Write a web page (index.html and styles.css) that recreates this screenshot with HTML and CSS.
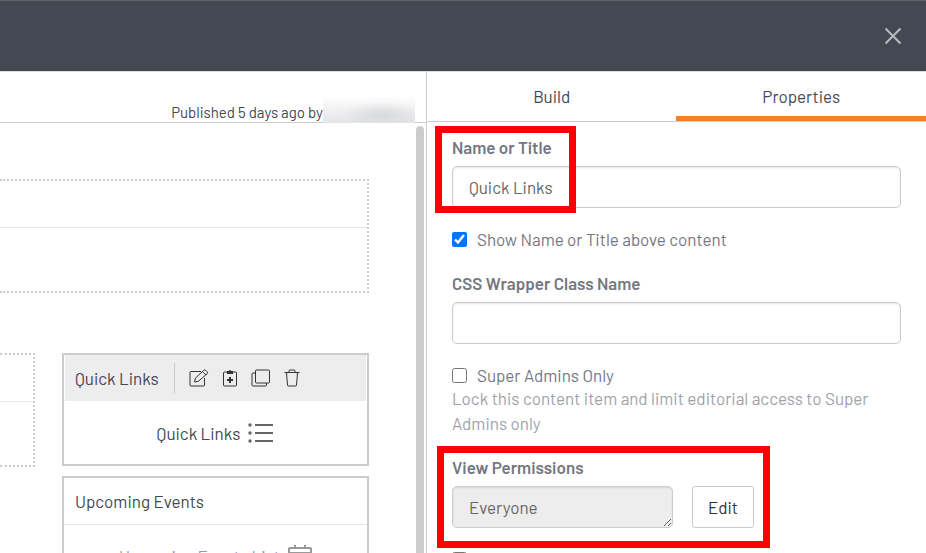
FILE: index.html
```html
<!DOCTYPE html>
<html lang="en">
<head>
    <meta charset="UTF-8">
    <meta name="viewport" content="width=device-width, initial-scale=1.0">
    <title>Quick Links - Properties</title>
    <link rel="stylesheet" href="styles.css">
</head>
<body>
    <header class="topbar">
        <button type="button" class="close-button" aria-label="Close">
            <svg width="18" height="18" viewBox="0 0 18 18"><path d="M1.500 1.500l15 15M16.500 1.500l-15 15"/></svg>
        </button>
    </header>

    <main class="editor">
        <section class="preview">
            <div class="status-bar">
                <span>Published 5 days ago by</span>
                <span class="author"></span>
            </div>

            <div class="canvas-wrap">
                <div class="canvas">
                    <div class="zone">
                        <div class="zone-header"></div>
                    </div>

                    <div class="canvas-row">
                        <div class="zone">
                            <div class="zone-header"></div>
                        </div>

                        <div class="widgets">
                            <article class="widget selected">
                                <div class="widget-header">
                                    <span class="widget-title">Quick Links</span>
                                    <div class="widget-tools">
                                        <button type="button" aria-label="Edit">
                                            <svg width="20" height="18" viewBox="0 0 20 18"><path d="M12 2.500H2a1 1 0 0 0-1 1V16a1 1 0 0 0 1 1h12.500a1 1 0 0 0 1-1V9"/><path d="M5.500 13l1-4L14.700 1.400a1.500 1.500 0 0 1 2.100 0l1.300 1.300a1.500 1.500 0 0 1 0 2.100L9.500 12.200zM13.500 2.600l3.300 3.300"/></svg>
                                        </button>
                                        <button type="button" aria-label="Add to clipboard">
                                            <svg width="16" height="18" viewBox="0 0 16 18"><path d="M5 3H2.500a1 1 0 0 0-1 1v12a1 1 0 0 0 1 1h11a1 1 0 0 0 1-1V4a1 1 0 0 0-1-1H11"/><path class="solid" d="M5 2h2a1 1 0 0 1 2 0h2v3H5z"/><path class="thick" d="M8 8v6M5 11h6"/></svg>
                                        </button>
                                        <button type="button" aria-label="Copy">
                                            <svg width="20" height="18" viewBox="0 0 20 18"><rect x="4.500" y="1" width="14" height="13" rx="1"/><path d="M4.500 4H2a1 1 0 0 0-1 1v11a1 1 0 0 0 1 1h12.500a1 1 0 0 0 1-1v-2"/></svg>
                                        </button>
                                        <button type="button" aria-label="Delete">
                                            <svg width="16" height="18" viewBox="0 0 16 18"><path d="M.500 3.500h15M5 3.500V2a1 1 0 0 1 1-1h4a1 1 0 0 1 1 1v1.500M2.500 3.500l1 12.500a1 1 0 0 0 1 1h7a1 1 0 0 0 1-1l1-12.500"/></svg>
                                        </button>
                                    </div>
                                </div>
                                <div class="widget-body">
                                    <span>Quick Links</span>
                                    <svg class="list-icon" width="26" height="20" viewBox="0 0 26 20"><path d="M7 2h18M7 10h18M7 18h18"/><circle cx="2" cy="2" r="1.700"/><circle cx="2" cy="10" r="1.700"/><circle cx="2" cy="18" r="1.700"/></svg>
                                </div>
                            </article>

                            <article class="widget">
                                <div class="widget-header">
                                    <span class="widget-title">Upcoming Events</span>
                                </div>
                                <div class="widget-body muted">
                                    <span>Upcoming Events List</span>
                                    <svg class="calendar-icon" width="24" height="24" viewBox="0 0 24 24"><path d="M7 5V1M17 5V1M2 4h20a1 1 0 0 1 1 1v17a1 1 0 0 1-1 1H2a1 1 0 0 1-1-1V5a1 1 0 0 1 1-1zM1 9h22"/></svg>
                                </div>
                            </article>
                        </div>
                    </div>
                </div>
                <div class="scroll-thumb"></div>
            </div>
        </section>

        <aside class="panel">
            <nav class="tabs">
                <a href="#build" class="tab">Build</a>
                <a href="#properties" class="tab active">Properties</a>
            </nav>

            <form class="properties" id="properties">
                <div class="field">
                    <label class="field-label" for="itemName">Name or Title</label>
                    <input type="text" class="control" id="itemName" value="Quick Links">
                    <div class="callout callout-name"></div>
                </div>

                <div class="check-row">
                    <input type="checkbox" id="showName" checked>
                    <label for="showName">Show Name or Title above content</label>
                </div>

                <div class="field">
                    <label class="field-label" for="cssClass">CSS Wrapper Class Name</label>
                    <input type="text" class="control" id="cssClass">
                </div>

                <div>
                    <div class="check-row">
                        <input type="checkbox" id="superAdmins" aria-describedby="superAdminsHelp">
                        <label for="superAdmins">Super Admins Only</label>
                    </div>
                    <p class="help" id="superAdminsHelp">Lock this content item and limit editorial access to Super Admins only</p>
                </div>

                <div class="field">
                    <label class="field-label" for="viewPermissions">View Permissions</label>
                    <div class="permission-row">
                        <textarea class="control" id="viewPermissions" rows="1" readonly>Everyone</textarea>
                        <button type="button" class="edit-button">Edit</button>
                    </div>
                    <div class="callout callout-permissions"></div>
                </div>

                <div class="check-row">
                    <input type="checkbox" aria-label="Option">
                </div>
            </form>
        </aside>
    </main>
</body>
</html>
```

FILE: styles.css
```css
* {
    margin: 0;
    padding: 0;
    box-sizing: border-box;
}

body {
    font-family: Barlow, Roboto, sans-serif;
    font-size: 17px;
    font-weight: 400;
    line-height: 22px;
    color: #444853;
    background: #fff;
    height: 100vh;
    display: flex;
    flex-direction: column;
    overflow: hidden;
}

button,
input,
textarea {
    font: inherit;
    color: inherit;
}

button {
    background: none;
    border: none;
    cursor: pointer;
}

svg {
    display: block;
    fill: none;
    stroke: #333;
}

/* Top bar */
.topbar {
    flex: none;
    height: 72px;
    padding: 0 24px;
    background: #444853;
    border-top: 1px solid #626468;
    border-bottom: 1px solid #dfdfe3;
    display: flex;
    align-items: center;
    justify-content: flex-end;
}

.close-button svg {
    stroke: #b9babc;
    stroke-width: 2;
}

.editor {
    flex: 1;
    min-height: 0;
    display: grid;
    grid-template-columns: 46fr 54fr;
}

/* Preview */
.preview {
    min-width: 0;
    min-height: 0;
    display: flex;
    flex-direction: column;
}

.status-bar {
    flex: none;
    height: 51px;
    padding-right: 11px;
    border-bottom: 1px solid #ccc;
    font-size: 15px;
    display: flex;
    align-items: flex-end;
    justify-content: flex-end;
}

.status-bar span {
    line-height: 20px;
}

.status-bar .author {
    width: 92px;
    height: 26px;
    margin-bottom: -1px;
    background: radial-gradient(ellipse at 65% 70%, #d8d9db, rgba(229, 230, 232, 0) 50%), linear-gradient(#fdfdfd, #e4e5e7);
}

.canvas-wrap {
    flex: 1;
    min-height: 0;
    display: flex;
    gap: 47px;
    padding-right: 2px;
}

.canvas {
    flex: 1;
    min-width: 0;
    padding-top: 56px;
    display: flex;
    flex-direction: column;
    gap: 60px;
}

.scroll-thumb {
    width: 8px;
    margin-top: 3px;
    background: #ccc;
    border-radius: 4px 4px 0 0;
}

.canvas-row {
    display: grid;
    grid-template-columns: 35px 1fr;
    gap: 27px;
    align-items: start;
}

.zone {
    flex: none;
    height: 114px;
    border: 2px dotted #ccc;
    border-left: none;
}

.zone-header {
    height: 47px;
    border-bottom: 1px solid #e8e8e8;
}

.widgets {
    display: flex;
    flex-direction: column;
    gap: 10px;
}

.widget {
    height: 113px;
    border: 2px solid #ccc;
    display: flex;
    flex-direction: column;
}

.widget-header {
    height: 47px;
    padding: 0 11px;
    border-bottom: 1px solid #e8e8e8;
    display: flex;
    align-items: center;
}

.selected .widget-header {
    height: 46px;
    margin: 0 1px;
    padding: 0 10px;
    background: #ededed;
    border-bottom: none;
}

.widget-tools {
    height: 30px;
    margin-left: 15px;
    padding-left: 14px;
    border-left: 1px solid #ccc;
    display: flex;
    align-items: center;
    gap: 13px;
}

.widget-tools .solid {
    fill: #333;
    stroke: none;
}

.widget-tools .thick {
    stroke-width: 2;
}

.widget-body {
    flex: 1;
    display: flex;
    align-items: center;
    justify-content: center;
    gap: 8px;
}

.list-icon {
    fill: #666;
    stroke: #666;
    stroke-width: 2;
}

.list-icon circle {
    stroke: none;
}

.muted {
    color: #999;
}

.calendar-icon {
    stroke: #999;
    stroke-width: 2;
}

/* Properties panel */
.panel {
    min-width: 0;
    border-left: 1px solid #ccc;
}

.tabs {
    height: 50px;
    border-bottom: 1px solid #ccc;
    display: flex;
}

.tab {
    flex: 1;
    padding-top: 4px;
    border-bottom: 5px solid transparent;
    color: #444853;
    text-decoration: none;
    display: flex;
    align-items: center;
    justify-content: center;
}

.tab.active {
    border-bottom-color: #f68026;
}

.properties {
    padding: 14px 25px;
    color: #747782;
    display: flex;
    flex-direction: column;
    gap: 20px;
}

.field {
    position: relative;
}

.field-label {
    display: block;
    margin-bottom: 8px;
    font-weight: 600;
}

.control {
    display: block;
    width: 100%;
    height: 42px;
    padding: 8px 16px;
    background: #fff;
    border: 1px solid #ccc;
    border-radius: 5px;
    box-shadow: inset 0 1px 2px rgba(0, 0, 0, 0.1);
    color: #666;
}

textarea.control {
    width: 221px;
    background: #ededed;
    line-height: 24px;
    overflow: hidden;
}

.check-row {
    min-height: 22px;
    display: flex;
    align-items: center;
    gap: 10px;
}

.properties > .check-row {
    margin-bottom: 2px;
}

.check-row input {
    width: 15px;
    height: 15px;
}

.help {
    line-height: 25px;
    color: #a0a2a9;
}

.permission-row {
    display: flex;
    gap: 19px;
}

.edit-button {
    height: 42px;
    padding: 0 15px;
    border: 1px solid #ccc;
    border-radius: 3px;
    color: #333;
}

/* Highlight frames over the fields */
.callout {
    position: absolute;
    border: 7px solid #fb0007;
    pointer-events: none;
}

.callout-name {
    top: -10px;
    left: -17px;
    width: 141px;
    height: 87px;
}

.callout-permissions {
    top: -10px;
    left: -15px;
    width: 333px;
    height: 102px;
}
```
